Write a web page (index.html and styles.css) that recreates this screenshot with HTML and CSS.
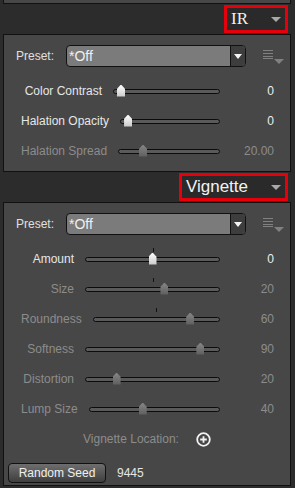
FILE: index.html
```html
<!DOCTYPE html>
<html>
<head>
 <title>Effects</title>
 <link rel="stylesheet" href="styles.css">
</head>
<body>
 <div class="panel-end"></div>

 <div class="section-head">
  <div class="combo"><span class="combo-name serif">IR</span><span class="combo-arrow"></span></div>
 </div>
 <div class="panel panel-ir">
  <div class="preset-row">
   <span class="preset-label">Preset:</span>
   <div class="dropdown"><span class="dropdown-text">*Off</span><span class="dropdown-btn"></span></div>
   <span class="menu-icon"><span class="menu-lines"></span><span class="menu-arrow"></span></span>
  </div>
  <div class="slider-row">
   <span class="slider-label">Color Contrast</span>
   <div class="track"><span class="thumb" style="left: 7px"></span></div>
   <span class="slider-value">0</span>
  </div>
  <div class="slider-row">
   <span class="slider-label">Halation Opacity</span>
   <div class="track"><span class="thumb" style="left: 7px"></span></div>
   <span class="slider-value">0</span>
  </div>
  <div class="slider-row off">
   <span class="slider-label">Halation Spread</span>
   <div class="track"><span class="thumb" style="left: 24%"></span></div>
   <span class="slider-value">20.00</span>
  </div>
 </div>

 <div class="section-head">
  <div class="combo"><span class="combo-name">Vignette</span><span class="combo-arrow"></span></div>
 </div>
 <div class="panel panel-vig">
  <div class="preset-row">
   <span class="preset-label">Preset:</span>
   <div class="dropdown"><span class="dropdown-text">*Off</span><span class="dropdown-btn"></span></div>
   <span class="menu-icon"><span class="menu-lines"></span><span class="menu-arrow"></span></span>
  </div>
  <div class="slider-row">
   <span class="slider-label">Amount</span>
   <div class="track"><span class="tick"></span><span class="thumb" style="left: 50%"></span></div>
   <span class="slider-value">0</span>
  </div>
  <div class="slider-row off">
   <span class="slider-label">Size</span>
   <div class="track"><span class="tick"></span><span class="thumb" style="left: 59%"></span></div>
   <span class="slider-value">20</span>
  </div>
  <div class="slider-row off">
   <span class="slider-label">Roundness</span>
   <div class="track"><span class="tick"></span><span class="thumb" style="left: 77%"></span></div>
   <span class="slider-value">60</span>
  </div>
  <div class="slider-row off">
   <span class="slider-label">Softness</span>
   <div class="track"><span class="thumb" style="left: 86%"></span></div>
   <span class="slider-value">90</span>
  </div>
  <div class="slider-row off">
   <span class="slider-label">Distortion</span>
   <div class="track"><span class="thumb" style="left: 23%"></span></div>
   <span class="slider-value">20</span>
  </div>
  <div class="slider-row off">
   <span class="slider-label">Lump Size</span>
   <div class="track"><span class="thumb" style="left: 41%"></span></div>
   <span class="slider-value">40</span>
  </div>
  <div class="location-row">
   <span>Vignette Location:</span>
   <svg width="15" height="15" viewBox="0 0 15 15">
    <circle cx="7.5" cy="7.5" r="6.3" fill="none" stroke="#f2f2f2" stroke-width="1.8"/>
    <path d="M7.5 4.2v6.6M4.2 7.5h6.6" stroke="#f2f2f2" stroke-width="1.8"/>
   </svg>
  </div>
  <div class="seed-row">
   <button class="seed-btn">Random Seed</button>
   <span class="seed-value">9445</span>
  </div>
 </div>
</body>
</html>
```

FILE: styles.css
```css
/* Général */
body {
 margin: 0;
 background-color: #2c2c2c;
 font-family: "Liberation Sans", Arial, sans-serif;
 font-size: 12px;
 color: #e2e2e2;
}

/* Bas du panneau précédent */
.panel-end {
 height: 3px;
 margin: 0 4px 0 3px;
 background-color: #474747;
 border: 1px solid #111;
 border-top: none;
}

/* En-tête de section (combo rouge) */
.section-head {
 height: 30px;
 display: flex;
 justify-content: flex-end;
 align-items: flex-start;
 padding-right: 7px;
}
.combo {
 box-sizing: border-box;
 height: 28px;
 margin-top: 1px;
 display: flex;
 align-items: center;
 gap: 23px;
 padding: 0 4px 0 4px;
 border: 3px solid #e5000c;
 background-color: #2a2a2a;
}
.combo-name {
 font-size: 17px;
 color: #f2f2f2;
}
.combo-name.serif {
 font-family: "Liberation Serif", "Times New Roman", serif;
}
.combo-arrow {
 width: 0;
 height: 0;
 border-left: 5px solid transparent;
 border-right: 5px solid transparent;
 border-top: 5px solid #a8a8a8;
}

/* Panneau */
.panel {
 margin: 0 4px 0 3px;
 background-color: #474747;
 border: 1px solid #111;
}
.panel-ir {
 padding-bottom: 5px;
}
.panel-vig {
 padding-bottom: 2px;
}

/* Ligne preset */
.preset-row {
 display: flex;
 align-items: center;
 padding: 10px 0 0 12px;
 margin-bottom: 9px;
}
.preset-label {
 width: 50px;
 color: #e0e0e0;
}
.dropdown {
 box-sizing: border-box;
 width: 180px;
 height: 22px;
 display: flex;
 border: 1px solid #111;
 border-radius: 4px;
 background-color: #7b7b7b;
 overflow: hidden;
}
.dropdown-text {
 flex: 1;
 padding-left: 2px;
 font-size: 14px;
 line-height: 20px;
 color: #f0f0f0;
}
.dropdown-btn {
 width: 14px;
 border-left: 1px solid #111;
 background-color: #3d3d3d;
 position: relative;
}
.dropdown-btn::after {
 content: "";
 position: absolute;
 left: 3px;
 top: 8px;
 border-left: 4px solid transparent;
 border-right: 4px solid transparent;
 border-top: 5px solid #f4f4f4;
}
.menu-icon {
 margin-left: 17px;
 width: 21px;
 height: 16px;
 position: relative;
}
.menu-lines {
 position: absolute;
 left: 0;
 top: 2px;
 width: 10px;
 height: 7px;
 border-top: 1px solid #808080;
 border-bottom: 1px solid #808080;
}
.menu-lines::after {
 content: "";
 position: absolute;
 left: 0;
 right: 0;
 top: 2px;
 height: 2px;
 border-top: 1px solid #808080;
 border-bottom: 1px solid #808080;
}
.menu-arrow {
 position: absolute;
 left: 11px;
 top: 11px;
 border-left: 5px solid transparent;
 border-right: 5px solid transparent;
 border-top: 5px solid #808080;
}

/* Curseurs */
.slider-row {
 height: 30px;
 display: flex;
 align-items: center;
 padding: 0 16px 0 17px;
}
.slider-label {
 flex: none;
 text-align: right;
 margin-right: 11px;
 color: #e6e6e6;
 white-space: nowrap;
}
.panel-ir .slider-label {
 min-width: 81px;
}
.panel-vig .slider-label {
 min-width: 53px;
}
.track {
 flex: 1;
 height: 3px;
 border: 1px solid #0c0c0c;
 border-radius: 3px;
 background-color: #5a5a5a;
 position: relative;
}
.slider-value {
 width: 54px;
 text-align: right;
 color: #eeeeee;
}
.thumb {
 position: absolute;
 top: -5px;
 width: 8px;
 height: 12px;
 margin-left: -4px;
 clip-path: polygon(50% 0, 100% 35%, 100% 100%, 0 100%, 0 35%);
 background: linear-gradient(#ffffff, #c9c9c9);
}
.tick {
 position: absolute;
 left: 50%;
 top: -10px;
 width: 1px;
 height: 4px;
 background-color: #111;
}
.off .slider-label,
.off .slider-value {
 color: #8c8c8c;
}
.off .thumb {
 background: linear-gradient(#868686, #5e5e5e);
}

/* Emplacement du vignettage */
.location-row {
 height: 30px;
 display: flex;
 justify-content: center;
 align-items: center;
 gap: 17px;
 color: #8c8c8c;
}

/* Graine aléatoire */
.seed-row {
 display: flex;
 align-items: center;
 gap: 11px;
 padding: 9px 0 0 4px;
}
.seed-btn {
 box-sizing: border-box;
 width: 98px;
 height: 20px;
 padding: 0;
 font-family: inherit;
 font-size: 12px;
 color: #f0f0f0;
 border: 1px solid #111;
 border-radius: 4px;
 background: linear-gradient(#6e6e6e, #3e3e3e);
}
.seed-value {
 color: #e6e6e6;
}
```
